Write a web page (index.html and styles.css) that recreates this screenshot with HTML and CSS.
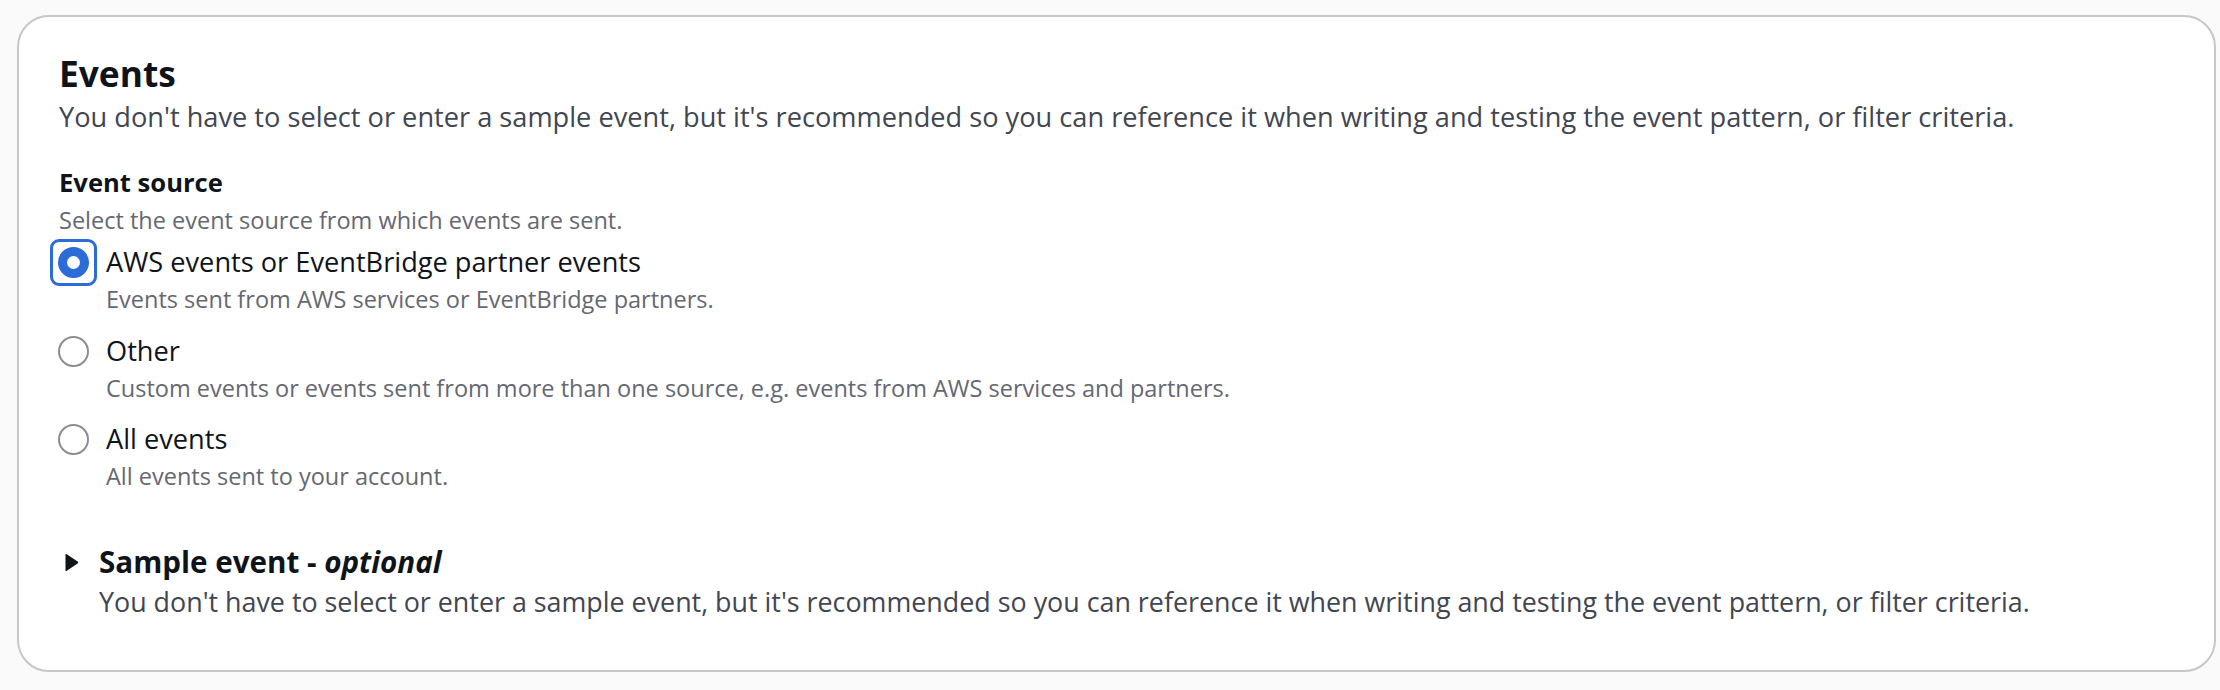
FILE: index.html
```html
<!DOCTYPE html>
<html lang="en">
<head>
<meta charset="utf-8">
<title>Events</title>
<link rel="stylesheet" href="styles.css">
</head>
<body>
<section class="card">
  <header class="card-header">
    <h2 class="title">Events</h2>
    <p class="header-desc">You don't have to select or enter a sample event, but it's recommended so you can reference it when writing and testing the event pattern, or filter criteria.</p>
  </header>

  <div class="field">
    <div class="field-label">Event source</div>
    <div class="field-desc">Select the event source from which events are sent.</div>
    <div class="radio-group">
      <div class="radio-item">
        <span class="radio-control">
          <span class="radio-circle checked"></span>
          <span class="focus-ring"></span>
        </span>
        <span class="radio-text">
          <span class="radio-label">AWS events or EventBridge partner events</span>
          <span class="radio-desc">Events sent from AWS services or EventBridge partners.</span>
        </span>
      </div>
      <div class="radio-item">
        <span class="radio-control">
          <span class="radio-circle"></span>
        </span>
        <span class="radio-text">
          <span class="radio-label">Other</span>
          <span class="radio-desc">Custom events or events sent from more than one source, e.g. events from AWS services and partners.</span>
        </span>
      </div>
      <div class="radio-item">
        <span class="radio-control">
          <span class="radio-circle"></span>
        </span>
        <span class="radio-text">
          <span class="radio-label">All events</span>
          <span class="radio-desc">All events sent to your account.</span>
        </span>
      </div>
    </div>
  </div>

  <div class="expand">
    <div class="expand-header">
      <span class="caret">
        <svg width="15" height="19" viewBox="0 0 15 19" aria-hidden="true">
          <path d="M1.5 1.8 Q1.5 0.4 2.8 1.2 L13.6 8.4 Q14.8 9.5 13.6 10.6 L2.8 17.8 Q1.5 18.6 1.5 17.2 Z" fill="#0f141a"/>
        </svg>
      </span>
      <span class="expand-title">Sample event - <em>optional</em></span>
    </div>
    <div class="expand-desc">You don't have to select or enter a sample event, but it's recommended so you can reference it when writing and testing the event pattern, or filter criteria.</div>
  </div>
</section>
</body>
</html>
```
FILE: styles.css
```css
* { box-sizing: border-box; }

html, body {
  margin: 0;
  background: #fafafa;
}

body {
  padding: 15px 4px 18px 17px;
  font-family: "Open Sans", "Noto Sans", sans-serif;
  color: #0f141a;
}

.card {
  background: #ffffff;
  border: 2px solid #c6c6cd;
  border-radius: 32px;
  padding: 32px 40px 48.5px 40px;
  display: flex;
  flex-direction: column;
}

.card-header {
  display: flex;
  flex-direction: column;
}

.title {
  margin: 0;
  font-size: 35.3px;
  line-height: 48px;
  font-weight: 700;
  color: #0f141a;
}

.header-desc {
  margin: 0;
  font-size: 27.2px;
  line-height: 40px;
  color: #424650;
}

.field {
  margin-top: 26px;
  display: flex;
  flex-direction: column;
}

.field-label {
  font-size: 25.6px;
  line-height: 40px;
  font-weight: 700;
  color: #0f141a;
}

.field-desc {
  font-size: 23.5px;
  line-height: 34px;
  color: #656871;
}

.radio-group {
  margin-top: 5px;
  display: flex;
  flex-direction: column;
  gap: 14.5px;
}

.radio-item {
  display: flex;
  align-items: flex-start;
  gap: 17px;
}

.radio-control {
  position: relative;
  flex: 0 0 31px;
  width: 31px;
  height: 31px;
  margin-top: 5px;
  margin-left: -1px;
}

.radio-circle {
  display: block;
  width: 31px;
  height: 31px;
  border-radius: 50%;
  border: 2.5px solid #8c8c94;
  background: #ffffff;
}

.radio-circle.checked {
  border: 9.5px solid #2b6cd9;
  background: #ffffff;
}

.focus-ring {
  position: absolute;
  left: -8px;
  top: -8px;
  width: 47px;
  height: 47px;
  border: 3px solid #2b6cd9;
  border-radius: 9px;
}

.radio-text {
  display: flex;
  flex-direction: column;
}

.radio-label {
  font-size: 27.2px;
  line-height: 40px;
  color: #0f141a;
}

.radio-desc {
  font-size: 23.5px;
  line-height: 34px;
  color: #656871;
}

.expand {
  margin-top: 48.5px;
  display: flex;
  flex-direction: column;
}

.expand-header {
  display: flex;
  align-items: center;
  height: 40px;
}

.caret {
  flex: 0 0 40px;
  display: flex;
  align-items: center;
  padding-left: 5px;
  padding-top: 2px;
}

.caret svg { display: block; }

.expand-title {
  font-size: 29.6px;
  line-height: 40px;
  font-weight: 700;
  color: #0f141a;
}

.expand-title em {
  font-style: italic;
  font-weight: 700;
}

.expand-desc {
  padding-left: 40px;
  font-size: 26.85px;
  line-height: 40px;
  color: #424650;
}
```
